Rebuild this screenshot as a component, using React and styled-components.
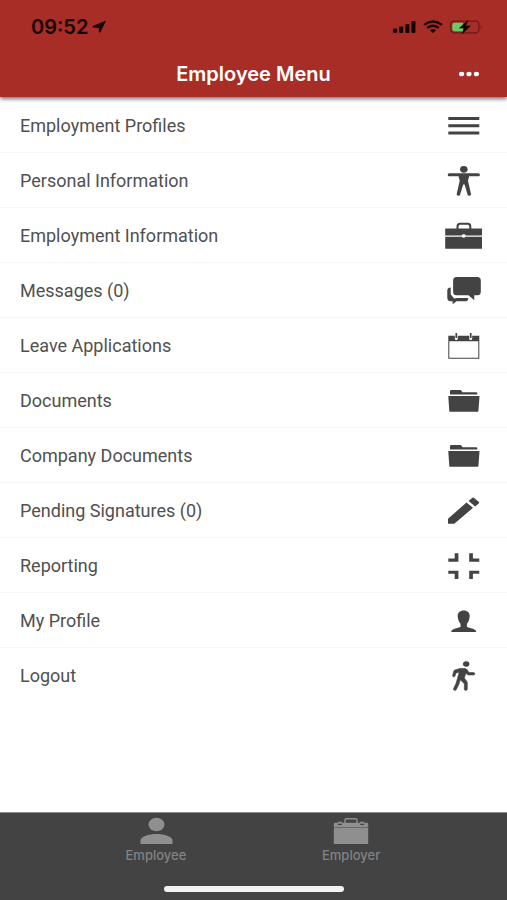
import React from "react";
import styled, { createGlobalStyle, ThemeProvider } from "styled-components";

const theme = {
  color: {
    red: "#a72d26",
    dark: "#434343",
    text: "#505050",
    line: "#f7f7f7",
    muted: "#8f8f8f",
    label: "#828282",
    white: "#ffffff",
  },
  font: {
    body: `Roboto, "Liberation Sans", sans-serif`,
    header: `Inter, "Liberation Sans", sans-serif`,
  },
};

const GlobalStyle = createGlobalStyle`
  * {
    box-sizing: border-box;
  }

  body {
    margin: 0;
    background-color: #ffffff;
  }
`;

const Page = styled.div`
  display: flex;
  flex-direction: column;
  min-height: 100vh;
  background-color: ${props => props.theme.color.white};
  color: ${props => props.theme.color.text};
  font-family: ${props => props.theme.font.body};
`;

const Header = styled.header`
  padding-bottom: 3px;
  background-color: ${props => props.theme.color.red};
  box-shadow: 0 2px 4px rgba(40, 40, 60, 0.65);
`;

const StatusBar = styled.div`
  display: flex;
  justify-content: space-between;
  align-items: center;
  height: 54px;
  padding: 0 24px 0 31px;
  color: #160403;
  font-family: ${props => props.theme.font.header};
  font-size: 20px;
  font-weight: 600;
`;

const StatusGroup = styled.div`
  display: flex;
  align-items: center;
  gap: ${props => props.$gap}px;
`;

const TitleBar = styled.div`
  display: grid;
  grid-template-columns: 56px 1fr 56px;
  align-items: center;
  height: 40px;
  padding: 0 10px;

  h1 {
    grid-column: 2;
    margin: 0;
    color: ${props => props.theme.color.white};
    font-family: ${props => props.theme.font.header};
    font-size: 20px;
    font-weight: 600;
    line-height: 40px;
    text-align: center;
  }
`;

const MoreButton = styled.button`
  display: grid;
  place-items: center;
  height: 40px;
  padding: 0;
  border: 0;
  background: none;
  color: ${props => props.theme.color.white};
`;

const Menu = styled.nav`
  flex: 1;
  padding-top: 1px;

  ul {
    margin: 0;
    padding: 0;
    list-style-type: none;
  }
`;

const MenuLink = styled.a`
  display: flex;
  justify-content: space-between;
  align-items: center;
  height: 55px;
  padding: 0 23px 0 20px;
  border-bottom: 1px solid
    ${props => (props.$last ? "transparent" : props.theme.color.line)};
  color: inherit;
  font-size: 18px;
  text-decoration: none;

  svg {
    color: ${props => props.theme.color.dark};
  }
`;

const Footer = styled.footer`
  display: flex;
  flex-direction: column;
  justify-content: space-between;
  align-items: center;
  height: 88px;
  padding: 3px 0 8px;
  border-top: 1px solid #8a8a8a;
  background-color: ${props => props.theme.color.dark};
`;

const Tabs = styled.nav`
  display: grid;
  grid-template-columns: 1fr 1fr;
  width: 77%;
`;

const Tab = styled.a`
  display: grid;
  justify-items: center;
  color: ${props => props.theme.color.label};
  font-family: ${props => props.theme.font.header};
  font-size: 13px;
  font-weight: 500;
  line-height: 14px;
  text-decoration: none;

  svg {
    color: ${props => props.theme.color.muted};
  }
`;

const HomeIndicator = styled.div`
  width: 180px;
  height: 6px;
  border-radius: 3px;
  background-color: #f2f2f2;
`;

const MenuIcon = ({ children }) => (
  <svg width="40" height="40" viewBox="0 0 40 40" fill="currentColor" aria-hidden="true">
    {children}
  </svg>
);

const BarsIcon = () => (
  <MenuIcon>
    <path d="M4.3 12h31v3h-31zM4.3 19.2h31v3h-31zM4.3 26.4h31v3h-31z" />
  </MenuIcon>
);

const PersonIcon = () => (
  <MenuIcon>
    <ellipse cx="19.8" cy="9.3" rx="3.8" ry="3.4" />
    <path d="M5.2 13.3h29.2a1.4 1.4 0 0 1 0 3h-9.2l-1.2 4.5 3 13.3c.4 1.9-2.9 2.4-3.4.6L20.6 24.5h-1.4l-3.1 10.2c-.6 1.8-3.8 1.3-3.4-.6l3-13.3-1.2-4.500H5.200a1.400 1.400 0 0 1 0-3z" />
  </MenuIcon>
);

const BriefcaseIcon = () => (
  <MenuIcon>
    <path
      d="M13.5 14v-2.600q0-2.600 2.600-2.600h7.600q2.600 0 2.600 2.600V14"
      fill="none"
      stroke="currentColor"
      strokeWidth="2"
    />
    <path d="M1.200 13.400H38v7H21.700a2 1.600 0 0 0-3.900 0H1.200zM1.200 21.800h16.700a2 1.600 0 0 0 3.700 0H38v12H1.200z" />
  </MenuIcon>
);

const ChatIcon = () => (
  <MenuIcon>
    <path d="M12.5 7h20.800q3.500 0 3.500 3.500v11.300q0 3.500-3.500 3.500h-3.100l.1 4.900-5.800-4.900h-12q-3.400 0-3.400-3.500V10.500q0-3.500 3.400-3.500z" />
    <path d="M6.700 17.500v6.800l3.300 4.200 3-.6h11.300q0 3.400-3.300 3.400h-8.500L8.600 34.200v-2.900H7Q3.300 31.300 3.300 27.700V20.500q0-3 3.400-3z" />
  </MenuIcon>
);

const CalendarIcon = () => (
  <MenuIcon>
    <path d="M4.300 10.700h31v23h-31zM5.300 16.300v16.400h29V16.300z" fillRule="evenodd" />
    <path d="M12.300 10v3.500M26.700 10v3.500" stroke="#fff" strokeWidth="3" strokeLinecap="round" />
    <path d="M12.300 8v5M26.700 8v5" stroke="currentColor" strokeWidth="1.700" />
  </MenuIcon>
);

const FolderIcon = () => (
  <MenuIcon>
    <path d="M6 14.600v-3.400q0-1.200 1.200-1.200h9q1 0 1.600 1.200l.7 1.100h13.700q1.100 0 1.100 1v1.300zM4.600 15.900h30.600q.4 0 .3.500l-1.100 14.500q-.1.900-1 .9H6.300q-.9 0-1-.9L4.300 16.400q0-.5.300-.5z" />
  </MenuIcon>
);

const PencilIcon = () => (
  <MenuIcon>
    <path d="M4 28.800 22.500 12.500l6.500 5.300L10.300 33.700H4zM24.600 10.900l3.500-3q1-.8 2 0l4.600 3.800q1 .8 0 1.700l-3.500 3z" />
  </MenuIcon>
);

const CollapseIcon = () => (
  <MenuIcon>
    <path d="M10.700 8.300h3.700v8.400H4.300v-3.100h6.400zM25.200 8.300h3.700v5.300h6.400v3.100H25.200zM4.300 25.700h10.100V34h-3.700v-5.200H4.300zM25.200 25.700h10.100v3.100h-6.400V34h-3.700z" />
  </MenuIcon>
);

const ProfileIcon = () => (
  <MenuIcon>
    <path d="M19.700 10.500c3.800 0 6.100 2.200 6 5.600-.1 3.800-1.500 6.300-2.800 7.700V27l6.600 2q2.700.8 2.900 3H7q.2-2.200 2.900-3l6.600-2v-3.200c-1.300-1.400-2.700-3.900-2.800-7.700-.1-3.400 2.200-5.600 6-5.600z" />
  </MenuIcon>
);

const WalkIcon = () => (
  <MenuIcon>
    <ellipse cx="22.200" cy="9" rx="3.200" ry="2.700" />
    <path
      d="m16 13.400 5 .2q1.600.2 2.400 1.500l1.500 2.400 4.600.1q1.300.1 1.300 1.200t-1.300 1.200l-5.200-.1q-1 0-1.700-.8l-.7-.8-1.600 4.700 2.100 2.700q.9 1.100.9 2.300v6q0 1.400-1.500 1.400t-1.500-1.400v-5.200l-4-4-1.300 4.100-2.600 5.500q-.6 1.300-2 .9t-.8-1.900l2.500-5.200 3.100-11-3.200.8-1 3q-.4 1.100-1.500.8t-.8-1.500l1-4q.2-1 1.100-1.300z"
      stroke="currentColor"
      strokeWidth=".6"
    />
  </MenuIcon>
);

const EmployeeIcon = () => (
  <svg width="36" height="32" viewBox="0 0 36 32" fill="currentColor" aria-hidden="true">
    <ellipse cx="18.500" cy="8.500" rx="8" ry="6.700" />
    <path d="M2.500 28v-3.400c0-4.200 8.500-6.600 16-6.600s16 2.400 16 6.600V28z" />
  </svg>
);

const EmployerIcon = () => (
  <svg width="36" height="32" viewBox="0 0 36 32" fill="currentColor" aria-hidden="true">
    <path
      d="M12 7V4q0-1.300 1.300-1.300h9.400Q24 2.700 24 4v3"
      fill="none"
      stroke="currentColor"
      strokeWidth="1.400"
    />
    <path d="M2.500 6.700h2.300v-1h4v1h18.400v-1h4v1h2.300q1.700 0 1.700 1.300v2.900H.8V8q0-1.300 1.700-1.300zM.8 11.500h34.400V28H.8z" />
    <path d="M4.800 8.300h4M27.200 8.300h4" stroke="#434343" strokeWidth="1.300" />
  </svg>
);

const LocationIcon = () => (
  <svg width="14" height="14" viewBox="0 0 14 14" fill="currentColor" aria-hidden="true">
    <path
      d="M13.200 1.400 8 12q-.5.700-.6-.2L7.200 7.400 1.200 7q-.9-.2-.1-.6z"
      stroke="currentColor"
      strokeWidth="1"
      strokeLinejoin="round"
    />
  </svg>
);

const SignalIcon = () => (
  <svg width="23" height="14" viewBox="0 0 23 14" fill="currentColor" aria-hidden="true">
    <rect x="0" y="8.500" width="4.200" height="4.500" rx="1.300" />
    <rect x="6.200" y="6.500" width="4" height="6.500" rx="1" />
    <rect x="12.400" y="4" width="4" height="9" rx="1" />
    <rect x="18.400" y="1" width="4" height="12" rx="1" />
  </svg>
);

const WifiIcon = () => (
  <svg width="20" height="14" viewBox="0 0 20 14" fill="none" stroke="currentColor" aria-hidden="true">
    <path d="M1 4.900q9-6.800 18 0" strokeWidth="2.400" />
    <path d="M4.200 7.900q5.800-4.300 11.600 0" strokeWidth="2.200" />
    <path d="M6.800 10.200q3.200-2.200 6.400 0L10 13z" fill="currentColor" stroke="none" />
  </svg>
);

const BatteryIcon = () => (
  <svg width="33" height="16" viewBox="0 0 33 16" aria-hidden="true">
    <rect x=".7" y="2.200" width="28.300" height="11.600" rx="3.500" fill="none" stroke="#6b1a15" strokeWidth="1.200" />
    <path d="M4.500 3.700H13v8.600H4.500Q2.300 12.300 2.300 10V6q0-2.300 2.200-2.300z" fill="#6cc968" />
    <path d="M30.800 6.300q2.200 1.700 0 3.400z" fill="#6b1a15" />
    <path d="M17.800 1.500 9.500 9h5l-2.300 5.800L20.300 7h-4.800z" fill="#160403" stroke="#160403" strokeWidth=".600" />
  </svg>
);

const DotsIcon = () => (
  <svg width="20" height="6" viewBox="0 0 20 6" fill="currentColor" aria-hidden="true">
    <ellipse cx="2.600" cy="3" rx="2.600" ry="2.300" />
    <ellipse cx="10" cy="3" rx="2.600" ry="2.300" />
    <ellipse cx="17.400" cy="3" rx="2.600" ry="2.300" />
  </svg>
);

const items = [
  { label: "Employment Profiles", Icon: BarsIcon },
  { label: "Personal Information", Icon: PersonIcon },
  { label: "Employment Information", Icon: BriefcaseIcon },
  { label: "Messages (0)", Icon: ChatIcon },
  { label: "Leave Applications", Icon: CalendarIcon },
  { label: "Documents", Icon: FolderIcon },
  { label: "Company Documents", Icon: FolderIcon },
  { label: "Pending Signatures (0)", Icon: PencilIcon },
  { label: "Reporting", Icon: CollapseIcon },
  { label: "My Profile", Icon: ProfileIcon },
  { label: "Logout", Icon: WalkIcon },
];

export default function App() {
  return (
    <ThemeProvider theme={theme}>
      <GlobalStyle />
      <Page>
        <Header>
          <StatusBar>
            <StatusGroup $gap={4}>
              <span>09:52</span>
              <LocationIcon />
            </StatusGroup>
            <StatusGroup $gap={7}>
              <SignalIcon />
              <WifiIcon />
              <BatteryIcon />
            </StatusGroup>
          </StatusBar>
          <TitleBar>
            <h1>Employee Menu</h1>
            <MoreButton type="button" aria-label="More">
              <DotsIcon />
            </MoreButton>
          </TitleBar>
        </Header>

        <Menu>
          <ul>
            {items.map(({ label, Icon }, i) => (
              <li key={label}>
                <MenuLink href="#" $last={i === items.length - 1}>
                  {label}
                  <Icon />
                </MenuLink>
              </li>
            ))}
          </ul>
        </Menu>

        <Footer>
          <Tabs>
            <Tab href="#">
              <EmployeeIcon />
              Employee
            </Tab>
            <Tab href="#">
              <EmployerIcon />
              Employer
            </Tab>
          </Tabs>
          <HomeIndicator />
        </Footer>
      </Page>
    </ThemeProvider>
  );
}
